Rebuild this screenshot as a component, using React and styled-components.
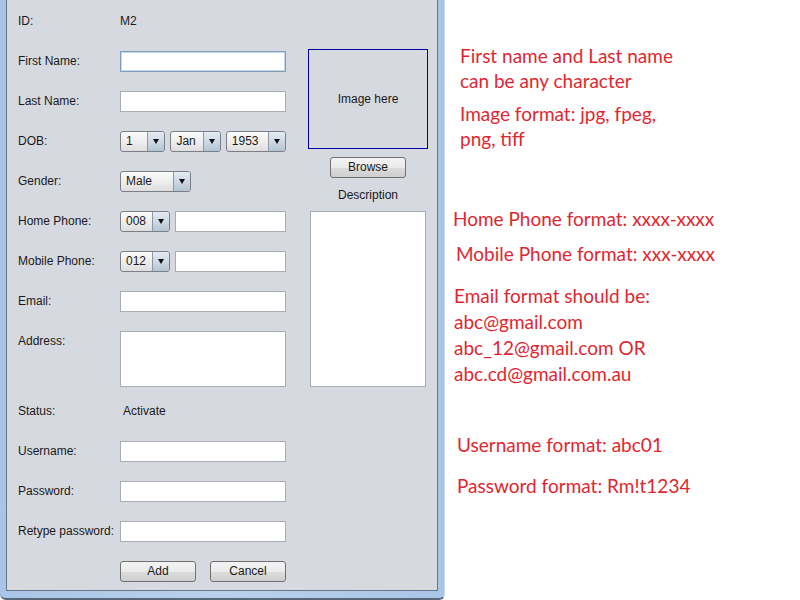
import React from "react";
import styled, { createGlobalStyle } from "styled-components";

const GlobalStyle = createGlobalStyle`
    body {
        margin: 0;
        background: #ffffff;
        font-family: "Liberation Sans", Arial, sans-serif;
    }
`

const Page = styled.div`
    display: flex;
    align-items: flex-start;
    width: 800px;
    height: 600px;
    overflow: hidden;
`

const Frame = styled.div`
    width: 432px;
    padding: 0 6px 7px 6px;
    background: linear-gradient(to right, #a9c5e6, #b9d1ec 50%, #a9c5e6);
    border-right: 1px solid #c9d6e4;
    border-bottom: 2px solid #56677a;
    border-radius: 0 0 6px 6px;
`

const Content = styled.div`
    display: flex;
    height: 590px;
    overflow: hidden;
    background: #d6d9df;
    border: 1px solid #65778b;
    border-top: none;
    color: #1a1a1a;
    font-size: 12px;
`

const Form = styled.div`
    display: flex;
    flex-direction: column;
    padding: 1px 0 0 11px;
    width: 268px;
`

const Row = styled.div`
    display: flex;
    flex: none;
    align-items: ${p => (p.$top ? "flex-start" : "center")};
    height: ${p => p.$h || 40}px;
    padding-top: ${p => (p.$top ? 10 : 0)}px;
    box-sizing: border-box;
`

const Label = styled.div`
    width: 102px;
    flex: none;
    line-height: 14px;
    margin-top: ${p => (p.$top ? 3 : 0)}px;
`

const Value = styled.div`
    padding-left: ${p => p.$pad || 0}px;
    line-height: 14px;
`

const Fields = styled.div`
    display: flex;
    width: 166px;
    gap: ${p => p.$gap || 5}px;
    justify-content: ${p => p.$spread ? "space-between" : "flex-start"};
`

const TextField = styled.input`
    box-sizing: border-box;
    width: ${p => p.$w || 166}px;
    height: 21px;
    margin: 0;
    padding: 0 3px;
    background: #ffffff;
    border: 1px solid ${p => (p.$focus ? "#7f9db9" : "#a9adb3")};
    box-shadow: ${p => (p.$focus ? "inset 0 0 0 1px #c6d7ea" : "none")};
    font: 12px "Liberation Sans", Arial, sans-serif;
    outline: none;
`

const TextArea = styled.textarea`
    box-sizing: border-box;
    display: block;
    width: ${p => p.$w}px;
    height: ${p => p.$h}px;
    margin: 0;
    padding: 2px;
    resize: none;
    background: #ffffff;
    border: 1px solid #a9adb3;
    outline: none;
    font: 12px "Liberation Sans", Arial, sans-serif;
`

const ComboBox = styled.div`
    box-sizing: border-box;
    display: flex;
    width: ${p => p.$w}px;
    height: 21px;
    border: 1px solid #7b7f85;
    border-radius: 3px;
    overflow: hidden;
    background: linear-gradient(#fbfbfb, #eeeeee 50%, #dedede);
`

const ComboText = styled.div`
    flex: 1;
    padding-left: 5px;
    line-height: 19px;
`

const ComboArrow = styled.div`
    display: flex;
    align-items: center;
    justify-content: center;
    width: 16px;
    border-left: 1px solid #8e99a5;
    background: linear-gradient(#e4ebf2, #cdd9e5 50%, #b3c4d4);

    &::after {
        content: "";
        border-left: 3.5px solid transparent;
        border-right: 3.5px solid transparent;
        border-top: 5px solid #111111;
    }
`

const Button = styled.div`
    box-sizing: border-box;
    width: 76px;
    height: 21px;
    margin-top: ${p => p.$top || 0}px;
    border: 1px solid #707070;
    border-radius: 3px;
    background: linear-gradient(#f3f3f3, #ebebeb 50%, #dcdcdc 51%, #cfcfcf);
    text-align: center;
    line-height: 19px;
    font-size: 12px;
`

const Side = styled.div`
    display: flex;
    flex-direction: column;
    align-items: center;
    width: 120px;
    margin-left: 22px;
    padding-top: 49px;
`

const ImageBox = styled.div`
    box-sizing: border-box;
    display: flex;
    align-items: center;
    justify-content: center;
    width: 120px;
    height: 100px;
    border: 1px solid #0000a0;
`

const Caption = styled.div`
    margin: 10px 0 9px;
    line-height: 14px;
`

const Notes = styled.div`
    display: flex;
    flex-direction: column;
    font-family: Lato, "Open Sans", sans-serif;
    font-size: 19px;
    color: #e2262f;
`

const Note = styled.div`
    margin-top: ${p => p.$top}px;
    padding-left: ${p => p.$left}px;
    line-height: ${p => p.$lh || 25}px;
`

const Combo = ({ w, value }) => (
    <ComboBox $w={w}>
        <ComboText>{value}</ComboText>
        <ComboArrow />
    </ComboBox>
);

class App extends React.Component {
    render() {
        return (
            <Page>
                <GlobalStyle />
                <Frame>
                    <Content>
                        <Form>
                            <Row>
                                <Label>ID:</Label>
                                <Value>M2</Value>
                            </Row>
                            <Row>
                                <Label>First Name:</Label>
                                <TextField $focus readOnly />
                            </Row>
                            <Row>
                                <Label>Last Name:</Label>
                                <TextField readOnly />
                            </Row>
                            <Row>
                                <Label>DOB:</Label>
                                <Fields>
                                    <Combo w={46} value="1" />
                                    <Combo w={51} value="Jan" />
                                    <Combo w={61} value="1953" />
                                </Fields>
                            </Row>
                            <Row>
                                <Label>Gender:</Label>
                                <Combo w={71} value="Male" />
                            </Row>
                            <Row>
                                <Label>Home Phone:</Label>
                                <Fields>
                                    <Combo w={51} value="008" />
                                    <TextField $w={111} readOnly />
                                </Fields>
                            </Row>
                            <Row>
                                <Label>Mobile Phone:</Label>
                                <Fields>
                                    <Combo w={51} value="012" />
                                    <TextField $w={111} readOnly />
                                </Fields>
                            </Row>
                            <Row>
                                <Label>Email:</Label>
                                <TextField readOnly />
                            </Row>
                            <Row $h={70} $top>
                                <Label $top>Address:</Label>
                                <TextArea $w={166} $h={56} readOnly />
                            </Row>
                            <Row>
                                <Label>Status:</Label>
                                <Value $pad={3}>Activate</Value>
                            </Row>
                            <Row>
                                <Label>Username:</Label>
                                <TextField readOnly />
                            </Row>
                            <Row>
                                <Label>Password:</Label>
                                <TextField readOnly />
                            </Row>
                            <Row>
                                <Label>Retype password:</Label>
                                <TextField readOnly />
                            </Row>
                            <Row>
                                <Label />
                                <Fields $spread>
                                    <Button>Add</Button>
                                    <Button>Cancel</Button>
                                </Fields>
                            </Row>
                        </Form>
                        <Side>
                            <ImageBox>Image here</ImageBox>
                            <Button $top={8}>Browse</Button>
                            <Caption>Description</Caption>
                            <TextArea $w={116} $h={176} readOnly />
                        </Side>
                    </Content>
                </Frame>
                <Notes>
                    <Note $top={43} $left={15}>
                        First name and Last name<br />can be any character
                    </Note>
                    <Note $top={8} $left={15}>
                        Image format: jpg, fpeg,<br />png, tiff
                    </Note>
                    <Note $top={55} $left={8}>Home Phone format: xxxx-xxxx</Note>
                    <Note $top={10} $left={11}>Mobile Phone format: xxx-xxxx</Note>
                    <Note $top={17} $left={9} $lh={26}>
                        Email format should be:<br />abc@gmail.com<br />
                        abc_12@gmail.com OR<br />abc.cd@gmail.com.au
                    </Note>
                    <Note $top={45} $left={12}>Username format: abc01</Note>
                    <Note $top={16} $left={12}>Password format: Rm!t1234</Note>
                </Notes>
            </Page>
        );
    }
}

export default App
